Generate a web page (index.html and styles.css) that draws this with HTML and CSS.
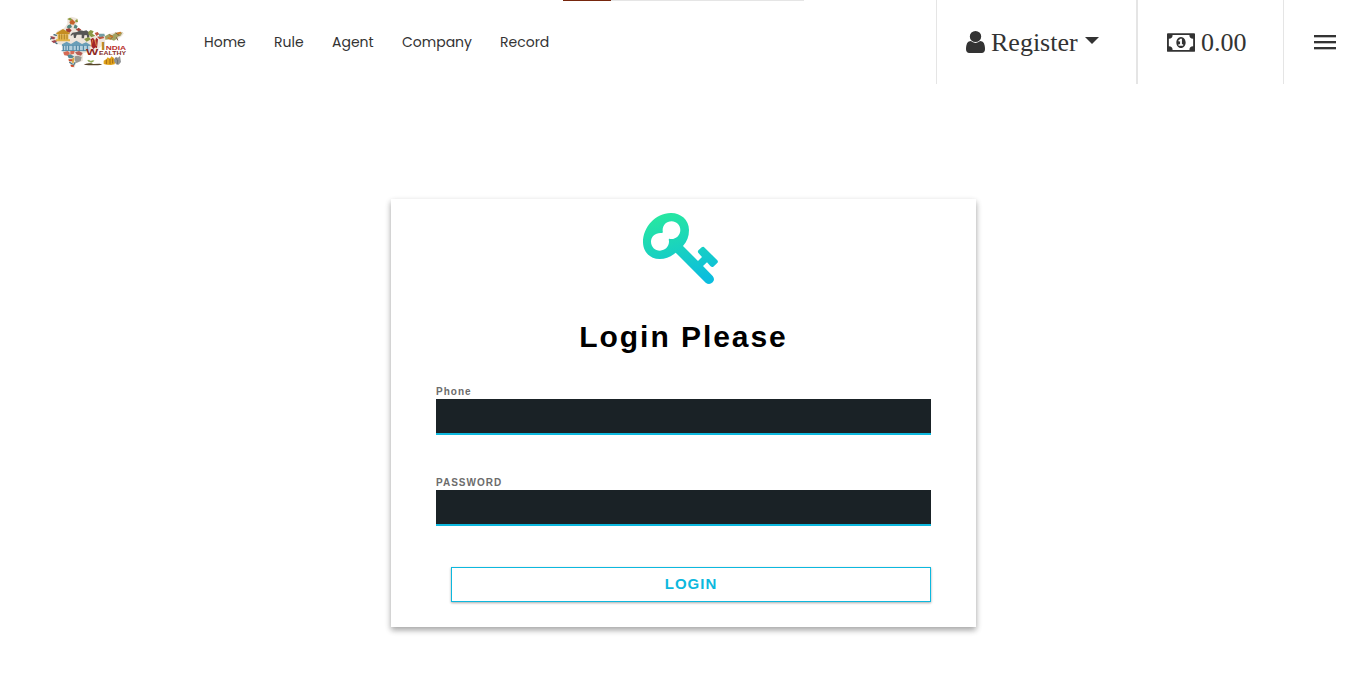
FILE: index.html
```html
<!DOCTYPE html>
<html lang="en">
<head>
<meta charset="utf-8">
<title>Login</title>
<link rel="stylesheet" href="styles.css">
</head>
<body>
<div class="progress"><div class="progress-bar"></div></div>
<header class="header">
  <a class="logo" href="#">
    <svg width="100" height="75" viewBox="0 0 300 225" role="img" aria-label="India Wealthy">
      <g stroke-linecap="round" stroke-linejoin="round">
        <path d="M82 41L94 35 112 40 114 52 106 62 112 72 128 76 148 82 160 92 188 97 205 88 225 82 244 80 252 85 245 94 234 102 215 105 198 99 192 118 172 134 150 140 130 145 128 168 108 174 104 188 96 187 88 168 84 154 70 148 68 138 64 120 44 115 32 106 32 95 45 88 52 78 72 70 82 56z" fill="#eee5dc"/>
        <path d="M82 42l8-4 7 5-5 5zM106 46l6-4 2 9-8 1z" fill="#8a9a3b"/>
        <path d="M88 51l9-8 9 9-5 7-10-1z" fill="#c4612c"/>
        <path d="M84 61l8-3 4 8-9 6-7-5zM104 58l9 5-3 8-9-2z" fill="#57877f"/>
        <path d="M78 72l10-2 7 6-6 7-10-3zM107 74l9-6 8 6-7 5z" fill="#a23d31"/>
        <path d="M49 84l20-12 20 12v4H49z" fill="#c58d20"/>
        <path d="M53 88h32v15H53zM48 103h42v6H48z" fill="#e3b449"/>
        <path d="M58 89v13M65 89v13M73 89v13M81 89v13" stroke="#946d1d" stroke-width="2"/>
        <path d="M91 91l6-8 14-2 9-5 11 2 8-2 8 6 1 15-6 2-2-9-7 1-1 9h-7v-11h-15l-3 10h-5l-2-11-6 4z" fill="#555554"/>
        <path d="M31 94c5-2 10 2 15 3l-3 6-9-1zM34 109l11-4 6 4-9 6z" fill="#9f4650"/>
        <path d="M34 99l-2 3M47 113l4 3M42 89l7 2" stroke="#406b80" stroke-width="4"/>
        <path d="M66 118l14-8 13 7 16-10 17 10 12-5 14 8v3H66z" fill="#6a9eb8"/>
        <path d="M68 123h81v14H68z" fill="#b5d0de"/>
        <path d="M70 123v14M78 123v14M86 123v14M99 123v14M109 123v14M118 123v14M130 123v14M142 123v14" stroke="#447e9d" stroke-width="3"/>
        <path d="M66 137h72" stroke="#518aa7" stroke-width="3"/>
        <path d="M145 80l7-5 9 4-4 7 9 6-12 5-9-9zM132 102l14-6 7 7-13 7z" fill="#8b9945"/>
        <path d="M164 84l9-3 5 7-9 5zM171 95l18-3 4 7-14 4z" fill="#bf5740"/>
        <path d="M176 86h17l2 8-17 2z" fill="#739fa4"/>
        <path d="M195 94l13-8 8 5 11-8 12 1 9-2-6 10-9 3-3 7-8 5-12-4-14 1z" fill="#a4a262"/>
        <path d="M209 90l10 5-8 7M228 84l9 7M230 98l3 7" stroke="#775a3b" stroke-width="3" fill="none"/>
        <path d="M211 93l6 2M233 85l8-2M205 99l5 2" stroke="#cf7a28" stroke-width="5"/>
        <path d="M152 103l7-5 5 7 3 22-7 5-6-8zM168 98l6 5-3 27-6-3z" fill="#a3252a"/>
        <path d="M158 105l-5 18M166 104l3 18" stroke="#d77c3a" stroke-width="3"/>
        <path d="M70 142l13-4 7 6-6 8-11-1zM91 138h13l-2 8-11 3z" fill="#d66b55"/>
        <path d="M105 142l12-4 11 6-5 8-12-3z" fill="#b65e55"/>
        <path d="M82 151l8-3 12 6-4 6-12-1z" fill="#538795"/>
        <path d="M104 154l10-2 11 4-3 12-13 6-5-8z" fill="#999893"/>
        <path d="M85 163h17l-2 6H87zM91 179h12l-2 7-8-1z" fill="#cf4b2a"/>
        <path d="M98 157l5 3-2 15-5-2z" fill="#dbac43"/>
        <path d="M89 172l8 5M105 173l-4 7" stroke="#56808b" stroke-width="4"/>
        <path d="M131 179q9-6 22-4l7 2 19-1 8 3q-26 4-56 0z" fill="#554329"/>
        <path d="M154 176q-1-6-3-9M151 171q-7 0-8-5 7-2 9 4 2-4 10-3-2 4-8 5" stroke="#6f9136" stroke-width="1" fill="#91ac4e"/>
        <path d="M191 167l8-4 4-6 7 4 4-7 7 4 5 10-2 10-11 2-13-1-9-2z" fill="#e2a51b"/>
        <path d="M199 165v11M210 162v14M218 162v12" stroke="#a36715" stroke-width="3"/>
        <path d="M222 163l6-7 6 2 6-5 3 18-7 8-8-1-6-9z" fill="#929496"/>
        <path d="M227 160l6 5-1 12" stroke="#596365" stroke-width="2" fill="none"/>
      </g>
      <g class="logo-text">
        <text x="138" y="149" font-size="28" textLength="37" lengthAdjust="spacingAndGlyphs" fill="#8e2922">W</text>
        <text x="183" y="136" font-size="34" textLength="13" lengthAdjust="spacingAndGlyphs" fill="#b68727">I</text>
        <text x="197" y="136" font-size="18" textLength="61" lengthAdjust="spacingAndGlyphs" fill="#b82e29">NDIA</text>
        <text x="177" y="149" font-size="14" textLength="81" lengthAdjust="spacingAndGlyphs" fill="#873129">EALTHY</text>
      </g>
    </svg>
  </a>
  <nav class="nav">
    <a class="nav-home" href="#">Home</a>
    <a class="nav-rule" href="#">Rule</a>
    <a class="nav-agent" href="#">Agent</a>
    <a class="nav-company" href="#">Company</a>
    <a class="nav-record" href="#">Record</a>
  </nav>
  <div class="account">
    <svg class="user-icon" viewBox="256 128 1280 1536" preserveAspectRatio="none"><path fill="currentColor" d="M1536 1399q0 109-62.5 187t-150.5 78h-854q-88 0-150.5-78t-62.5-187q0-85 8.5-160.5t31.5-152 58.5-131 94-89 134.5-34.5q131 128 313 128t313-128q76 0 134.5 34.5t94 89 58.5 131 31.5 152 8.5 160.5zm-256-887q0 159-112.5 271.5t-271.5 112.5-271.5-112.5-112.5-271.5 112.5-271.5 271.5-112.5 271.5 112.5 112.5 271.5z"/></svg>
    <span>Register</span>
    <i class="caret"></i>
  </div>
  <div class="balance">
    <svg class="money-icon" viewBox="0 0 30 20"><path fill="currentColor" fill-rule="evenodd" d="M1 0h28q1 0 1 1v18q0 1-1 1H1q-1 0-1-1V1q0-1 1-1zM6 2q0 4-4 4v8q4 0 4 4h18q0-4 4-4V6q-4 0-4-4zM15 4c3 0 5 3 5 6s-2 6-5 6-5-3-5-6 2-6 5-6zm-.7 2L12 8l1 1.2 1-.8V12h-1.7v1.5h5V12H16V6z"/></svg>
    <span>0.00</span>
  </div>
  <button class="menu" aria-label="Menu"><i></i><i></i><i></i></button>
</header>
<main class="main">
  <form class="card">
    <svg class="key" width="110" height="110" viewBox="0 0 330 330">
      <defs><linearGradient id="key-fill" gradientUnits="userSpaceOnUse" x1="110" y1="70" x2="170" y2="283"><stop offset="0" stop-color="#27e7a1"/><stop offset="1" stop-color="#0bbdde"/></linearGradient></defs>
      <path fill="url(#key-fill)" fill-rule="evenodd" d="M122 69C150 68 177 88 177 120C177 140 171 155 159 168L204 213L216 201L206 190Q201 185 206 180L215 172Q220 168 224 173L262 211Q266 216 261 220L250 230Q246 233 241 228L231 217L219 228L248 258Q256 268 248 277Q238 286 227 278L137 188C122 201 107 207 89 207C59 207 39 185 39 156C39 111 77 70 122 69ZM125 94C108 94 97 107 98 123C99 126 98 129 95 129C77 127 63 139 63 155C63 170 75 182 90 182C106 182 118 169 117 153C115 148 117 145 121 147C137 149 151 136 151 120C151 106 139 94 125 94Z"/>
    </svg>
    <h1 class="title">Login Please</h1>
    <div class="field">
      <label for="phone">Phone</label>
      <input id="phone" type="text">
    </div>
    <div class="field">
      <label for="password">PASSWORD</label>
      <input id="password" type="password">
    </div>
    <button class="submit" type="button">LOGIN</button>
  </form>
</main>
</body>
</html>
```
FILE: styles.css
```css
* { box-sizing: border-box; }
body { margin: 0; height: 675px; overflow: hidden; background: #fff; font-family: "Liberation Sans", Arial, sans-serif; }
.progress { position: absolute; top: 0; left: 563px; width: 241px; height: 1px; background: #e5e5e5; }
.progress-bar { width: 48px; height: 1px; background: #76260d; }
.header { display: flex; height: 84px; color: #333; }
.logo { width: 204px; padding: 5px 0 0 40px; }
.logo svg { display: block; }
.logo-text { font-family: "Liberation Sans", Arial, sans-serif; font-weight: 700; }
.nav { display: flex; gap: 28px; flex: 1; align-items: center; font: 400 14px/20px Poppins, Inter, sans-serif; }
.nav a { color: #333; text-decoration: none; white-space: nowrap; }
.nav-home { width: 42px; }
.nav-rule { width: 30px; }
.nav-agent { width: 42px; }
.nav-company { width: 70px; }
.nav-record { width: 50px; }
.account, .balance { display: flex; align-items: center; border-left: 1px solid #e5e5e5; font: 26px/30px "Liberation Serif", "Times New Roman", serif; }
.account { width: 201px; padding-left: 29px; border-right: 1px solid #e5e5e5; }
.balance { width: 146px; padding-left: 29px; }
.user-icon { width: 19px; height: 22px; margin-right: 6px; }
.money-icon { width: 28px; height: 19px; margin-right: 6px; }
.account span, .balance span { padding-top: 2px; }
.caret { margin: 0 0 3px 7px; border: 7.5px solid transparent; border-top: 7.5px solid #333; border-bottom: 0; }
.menu { display: flex; flex-direction: column; justify-content: center; gap: 4px; width: 83px; padding: 0 0 0 30px; border: 0; border-left: 1px solid #e5e5e5; background: none; }
.menu i { width: 22px; height: 2px; background: #333; box-shadow: 0 1px #bbb; }
.main { display: flex; justify-content: center; padding: 115px 0 0 1px; }
.card { display: flex; flex-direction: column; width: 585px; height: 428px; padding: 0 45px; background: #fff; box-shadow: 0 3px 6px rgba(0,0,0,.16), 0 3px 6px rgba(0,0,0,.23); }
.key { align-self: center; margin: -9px 0 0 3px; }
.title { margin: 18px 0 31px; text-align: center; color: #000; font-size: 30px; line-height: 38px; font-weight: 700; letter-spacing: 1.95px; }
.field { height: 91px; }
.field label { display: block; height: 12px; color: #6c6c6c; font-size: 10px; line-height: 10px; font-weight: 700; letter-spacing: 1px; }
.field input { display: block; width: 100%; height: 36px; padding: 0 8px; border: 0; border-bottom: 2px solid #0db8de; border-radius: 0; outline: 0; background: #1a2226; color: #ecf0f5; }
.submit { width: 480px; height: 35px; margin: -2px 0 0 15px; padding: 0 0 2px; flex: none; border: 1px solid #0db8de; border-radius: 0; background: #fff; color: #0db8de; font: 700 15px/20px "Liberation Sans", Arial, sans-serif; letter-spacing: 1px; box-shadow: 0 1px 3px rgba(0,0,0,.12), 0 1px 2px rgba(0,0,0,.24); }
```
